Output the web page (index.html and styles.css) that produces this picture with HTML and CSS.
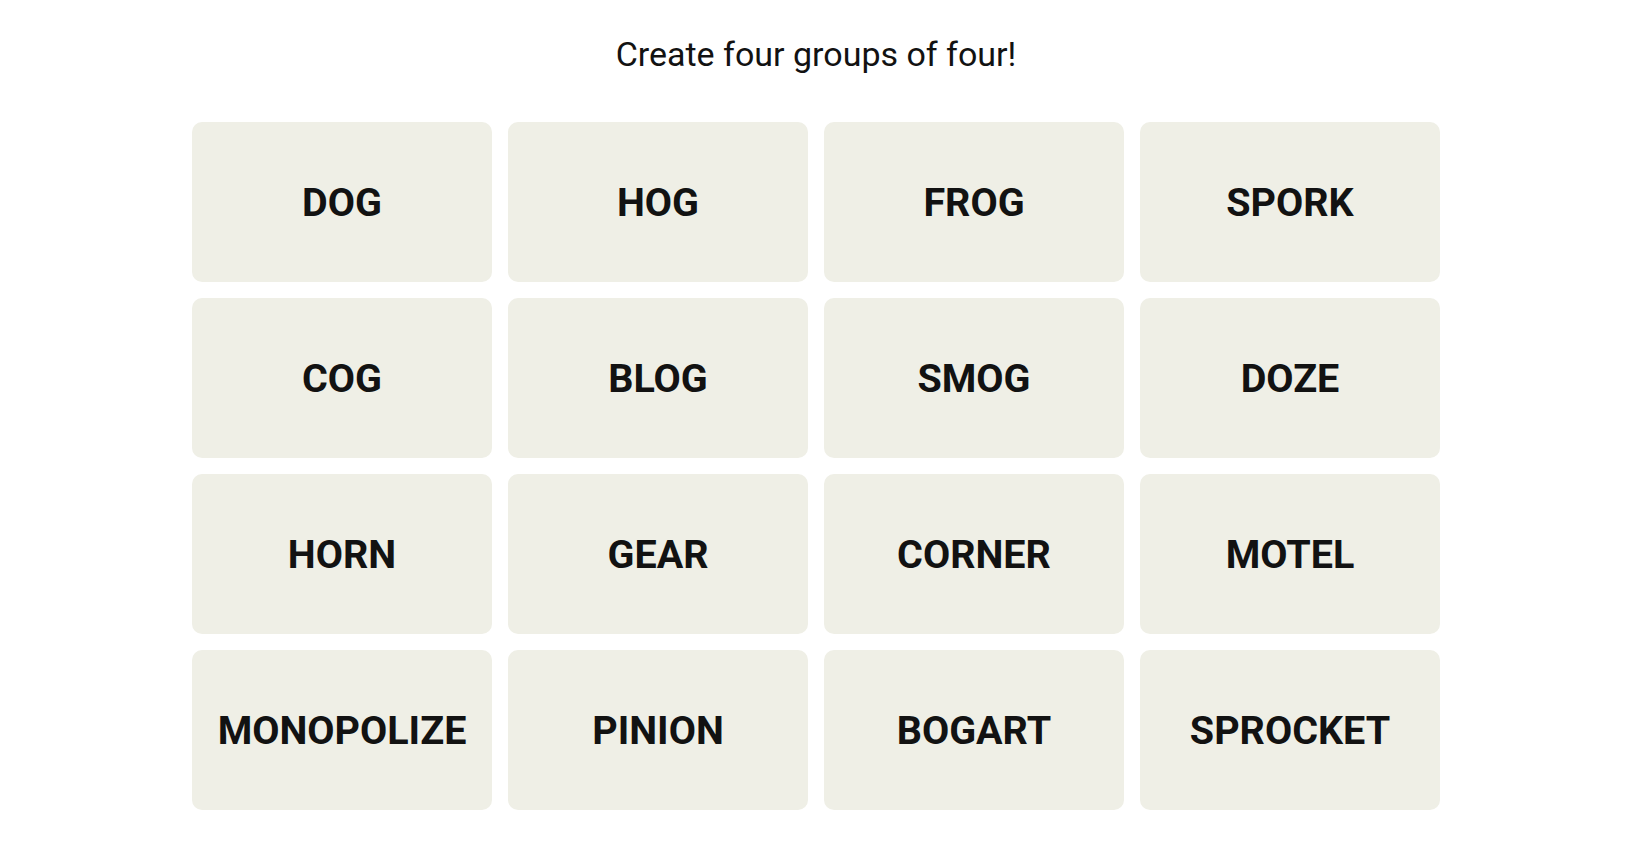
FILE: index.html
```html
<!DOCTYPE html>
<html lang="en">
<head>
<meta charset="utf-8">
<title>Connections</title>
<link rel="stylesheet" href="styles.css">
</head>
<body>
<main class="page">
  <h1 class="prompt">Create four groups of four!</h1>
  <section class="board">
    <button class="tile">DOG</button>
    <button class="tile">HOG</button>
    <button class="tile">FROG</button>
    <button class="tile">SPORK</button>
    <button class="tile">COG</button>
    <button class="tile">BLOG</button>
    <button class="tile">SMOG</button>
    <button class="tile">DOZE</button>
    <button class="tile">HORN</button>
    <button class="tile">GEAR</button>
    <button class="tile">CORNER</button>
    <button class="tile">MOTEL</button>
    <button class="tile">MONOPOLIZE</button>
    <button class="tile">PINION</button>
    <button class="tile">BOGART</button>
    <button class="tile">SPROCKET</button>
  </section>
</main>
</body>
</html>
```
FILE: styles.css
```css
html, body {
  margin: 0;
  padding: 0;
  background: #ffffff;
}

body {
  font-family: Roboto, "Liberation Sans", Arial, sans-serif;
  color: #121212;
}

.page {
  width: 1632px;
  display: flex;
  flex-direction: column;
  align-items: center;
}

.prompt {
  margin: 34px 0 0 0;
  font-size: 34px;
  line-height: 40px;
  font-weight: 400;
  color: #121212;
}

.board {
  margin-top: 48px;
  display: grid;
  grid-template-columns: repeat(4, 300px);
  grid-auto-rows: 160px;
  gap: 16px;
}

.tile {
  display: flex;
  align-items: center;
  justify-content: center;
  border: none;
  border-radius: 10px;
  background: #efefe6;
  color: #121212;
  font-family: Roboto, "Liberation Sans", Arial, sans-serif;
  font-size: 39.5px;
  font-weight: 700;
  text-transform: uppercase;
  padding: 0;
  margin: 0;
}
```
